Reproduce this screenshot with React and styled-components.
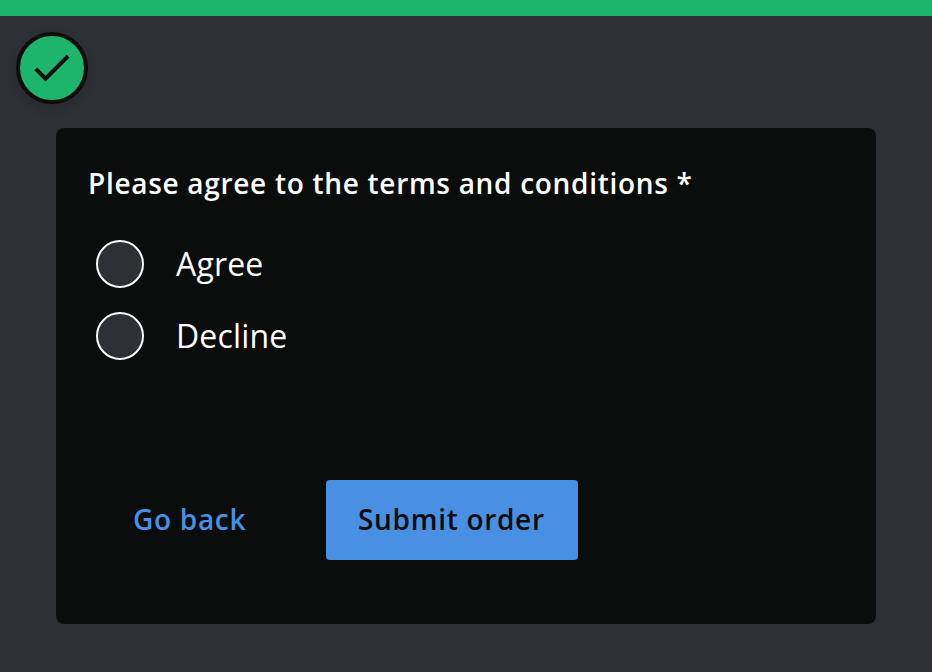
import React from "react";
import styled, { createGlobalStyle } from "styled-components";

const GlobalStyle = createGlobalStyle`
  *, *::before, *::after { box-sizing: border-box; }
  body { margin: 0; background: #2d3035; overflow: hidden; }
`;

const Page = styled.main`
  display: flex;
  flex-direction: column;
  width: 932px;
  height: 672px;
  border-top: 16px solid #1db56b;
  background: #2d3035;
  color: #fff;
  font-family: "Open Sans", sans-serif;
`;

const StatusBadge = styled.div`
  display: grid;
  place-items: center;
  width: 72px;
  height: 72px;
  margin: 16px 0 24px 16px;
  border: 4px solid #0b0d0c;
  border-radius: 50%;
  background: #1db56b;
  box-shadow: 0 4px 12px rgba(0, 0, 0, 0.16);
`;

const Card = styled.form`
  display: flex;
  flex-direction: column;
  width: 820px;
  height: 496px;
  margin-left: 56px;
  padding: 35px 32px;
  border-radius: 8px;
  background: #0b0d0c;
`;

const Question = styled.h1`
  margin: 0;
  font-size: 28px;
  line-height: 40px;
  font-weight: 600;
  letter-spacing: 0.7px;
  white-space: nowrap;
`;

const Options = styled.div`
  display: flex;
  flex-direction: column;
  gap: 24px;
  margin: 37px 0 0 8px;
`;

const Option = styled.label`
  display: flex;
  align-items: center;
  gap: 32px;
  height: 48px;
  font-size: 32px;
  line-height: 48px;
  letter-spacing: 0.15px;
`;

const Radio = styled.input.attrs({ type: "radio", name: "terms" })`
  appearance: none;
  flex: none;
  width: 48px;
  height: 48px;
  margin: 0;
  border: 2px solid #fff;
  border-radius: 50%;
  background: #2d3035;
`;

const Actions = styled.div`
  display: flex;
  gap: 48px;
  margin: 120px 0 0 13px;
`;

const Button = styled.button`
  height: 80px;
  padding: 0 32px 2px;
  width: ${({ $primary }) => ($primary ? "252px" : "177px")};
  border: 0;
  border-radius: 4px;
  background: ${({ $primary }) => ($primary ? "#498fe3" : "transparent")};
  color: ${({ $primary }) => ($primary ? "#0b0d0c" : "#498fe3")};
  font: 600 28px/40px "Open Sans", sans-serif;
  letter-spacing: 0.7px;
  text-align: left;
  white-space: nowrap;
`;

export default function App() {
  return (
    <>
      <GlobalStyle />
      <Page>
        <StatusBadge>
          <svg width="48" height="48" viewBox="0.25 0.25 24 24" fill="#0b0d0c" aria-hidden="true">
            <path d="M9 16.17 4.83 12l-1.42 1.41L9 19 21 7l-1.41-1.41z" />
          </svg>
        </StatusBadge>
        <Card>
          <Question>Please agree to the terms and conditions *</Question>
          <Options>
            <Option><Radio value="agree" />Agree</Option>
            <Option><Radio value="decline" />Decline</Option>
          </Options>
          <Actions>
            <Button type="button">Go back</Button>
            <Button type="submit" $primary>Submit order</Button>
          </Actions>
        </Card>
      </Page>
    </>
  );
}
